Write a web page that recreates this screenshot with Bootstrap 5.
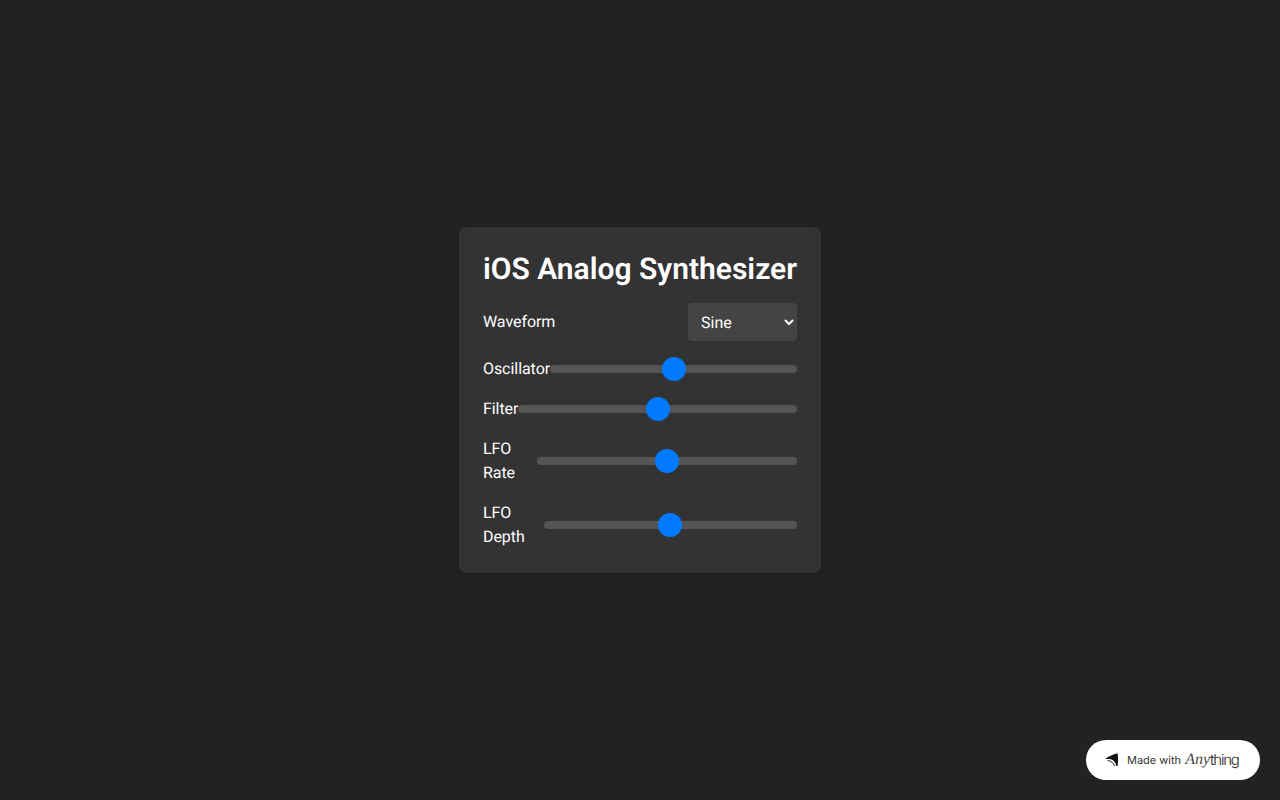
<!DOCTYPE html>
<html lang="en">
<head>
    <meta charset="UTF-8">
    <meta name="viewport" content="width=device-width, initial-scale=1.0">
    <title>iOS Analog Synthesizer</title>
    <link rel="stylesheet" href="https://cdn.jsdelivr.net/npm/bootstrap@5.3.0/dist/css/bootstrap.min.css">
    <style>
        body {
            background: #222222;
            color: #fff;
            font-family: Roboto, sans-serif;
            text-rendering: geometricPrecision;
        }
        .synth-page {
            min-height: 100vh;
        }
        .synth-panel {
            background: #333333;
            border-radius: 8px;
            padding: 24px;
            box-shadow: 0 4px 6px rgba(0, 0, 0, 0.1);
        }
        .synth-title {
            font-family: Roboto, sans-serif;
            font-size: 30px;
            line-height: 38px;
            font-weight: 600;
            margin-bottom: 14px;
        }
        .synth-label {
            letter-spacing: -0.05px;
            word-spacing: 1px;
        }
        .synth-select {
            background: #444444;
            color: #fff;
            border: 0;
            border-radius: 4px;
            width: 109px;
            height: 38px;
            padding: 0 9px;
            font-size: 16px;
            font-family: Roboto, sans-serif;
            text-rendering: geometricPrecision;
        }
        .synth-range {
            -webkit-appearance: none;
            appearance: none;
            width: 100%;
            height: 8px;
            border-radius: 4px;
            background: #555555;
            outline: none;
        }
        .synth-range::-webkit-slider-thumb {
            -webkit-appearance: none;
            width: 24px;
            height: 24px;
            border-radius: 50%;
            background: #007bff;
            cursor: pointer;
        }
        .made-badge {
            position: fixed;
            right: 20px;
            bottom: 20px;
            width: 174px;
            height: 40px;
            background: #fff;
            border-radius: 20px;
            color: #222;
            padding-left: 19px;
            text-decoration: none;
        }
        .made-text {
            font-family: Inter, sans-serif;
            font-size: 11px;
            margin-left: 8px;
            color: #333;
        }
        .made-any {
            font-family: "Liberation Serif", serif;
            font-style: italic;
            font-size: 16px;
            margin-left: 4px;
            color: #444;
        }
        .made-thing {
            font-family: Inter, sans-serif;
            font-weight: 300;
            font-size: 15px;
            letter-spacing: -1.2px;
            color: #222;
        }
    </style>
</head>
<body>
    <div class="synth-page d-flex justify-content-center align-items-center">
        <div class="synth-panel">
            <h1 class="synth-title">iOS Analog Synthesizer</h1>
            <div class="d-flex justify-content-between align-items-center mb-3">
                <label class="synth-label" for="waveform">Waveform</label>
                <select id="waveform" class="synth-select">
                    <option>Sine</option>
                    <option>Square</option>
                    <option>Triangle</option>
                    <option>Sawtooth</option>
                </select>
            </div>
            <div class="d-flex justify-content-between align-items-center mb-3">
                <label class="synth-label" for="oscillator">Oscillator</label>
                <input id="oscillator" class="synth-range" type="range" min="0" max="100" value="50">
            </div>
            <div class="d-flex justify-content-between align-items-center mb-3">
                <label class="synth-label" for="filter">Filter</label>
                <input id="filter" class="synth-range" type="range" min="0" max="100" value="50">
            </div>
            <div class="d-flex justify-content-between align-items-center mb-3">
                <label class="synth-label" for="lfoRate">LFO Rate</label>
                <input id="lfoRate" class="synth-range" type="range" min="0" max="100" value="50">
            </div>
            <div class="d-flex justify-content-between align-items-center">
                <label class="synth-label" for="lfoDepth">LFO Depth</label>
                <input id="lfoDepth" class="synth-range" type="range" min="0" max="100" value="50">
            </div>
        </div>
    </div>

    <a class="made-badge d-flex align-items-center" href="#">
        <svg width="14" height="14" viewBox="0 0 14 14">
            <path fill="#111" d="M0 6.3C3 3.5 8 1.5 12.6.3c.6 4.2.6 8.7 0 12.7h-1.4c-.4-3-2-5.6-4.7-6.4C4.5 6 2 6 0 6.3z"/>
            <path fill="none" stroke="#222" stroke-width="1" d="M2.5 7.6c3 0 6 1.9 7 5.4"/>
        </svg>
        <span class="made-text">Made with</span>
        <span class="made-any">Any</span><span class="made-thing">thing</span>
    </a>

    <script src="https://cdn.jsdelivr.net/npm/bootstrap@5.3.0/dist/js/bootstrap.bundle.min.js"></script>
</body>
</html>
